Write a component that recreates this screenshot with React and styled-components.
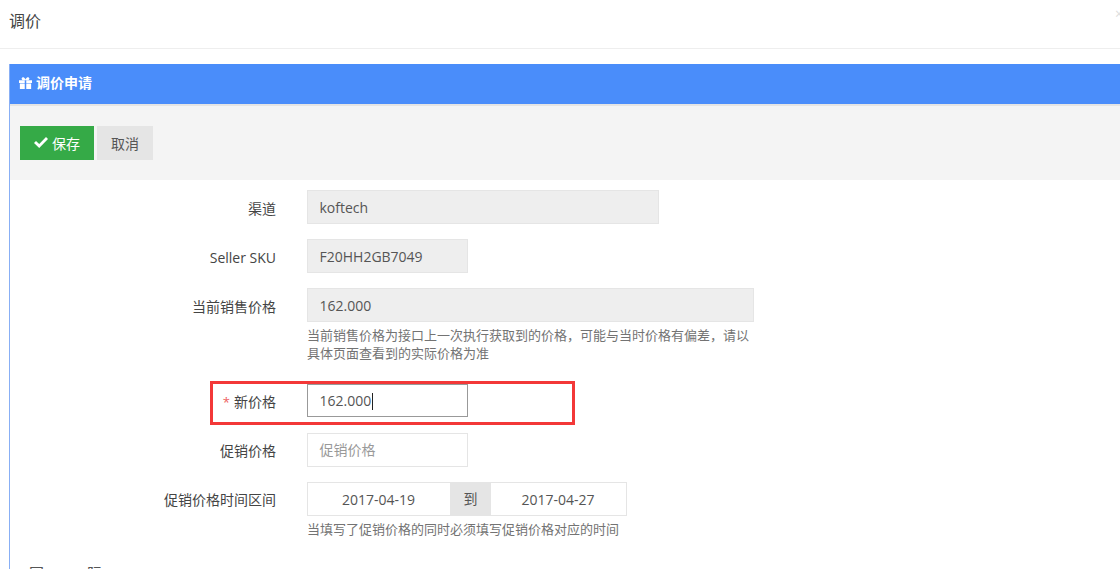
import React from "react";
import styled, { createGlobalStyle } from "styled-components";

const Global = createGlobalStyle`
  html, body { margin: 0; padding: 0; background: #fff; height: 569px; overflow: hidden; }
  * { box-sizing: border-box; }
  body { font-family: "Open Sans", "Noto Sans CJK SC", sans-serif; font-size: 14px; color: #555; }
`;
const Page = styled.div`width: 1120px; height: 569px; overflow: hidden; position: relative;`;
const ModalHeader = styled.header`
  height: 49px; border-bottom: 1px solid #eee; padding: 10px 9px 0;
  font-size: 16px; line-height: 22px; color: #444; position: relative;
`;
const CloseMark = styled.span`
  position: absolute; right: 0; top: 7px; font-size: 14px; color: #ddd; line-height: 14px; width: 5px; overflow: hidden;
`;
const Portlet = styled.section`
  margin: 15px 0 0 9px; border-left: 1px solid #88aff5; height: 520px;
`;
const PortletTitle = styled.div`
  height: 40px; background: #4a8dfa; color: #fff; display: flex; align-items: center;
  padding: 0 0 2px 9px; gap: 4px; font-size: 14px; font-weight: 700; line-height: 20px;
`;
const Actions = styled.div`
  border-top: 2px solid #e4e4e4; height: 76px; background: #f4f4f4;
  display: flex; align-items: flex-start; gap: 3px; padding: 20px 0 0 10px;
`;
const Btn = styled.button`
  height: 34px; border: 0; padding: 0 0 1px; font: inherit; font-size: 14px;
  display: flex; align-items: center; justify-content: center; gap: 4px;
  width: ${p => p.$w}px; background: ${p => p.$primary ? "#35aa47" : "#e5e5e5"};
  color: ${p => p.$primary ? "#fff" : "#555"};
`;
const Form = styled.div`padding-top: 10px; display: flex; flex-direction: column;`;
const Row = styled.div`
  display: flex; align-items: flex-start; margin-bottom: ${p => p.$mb ?? 15}px;
`;
const Label = styled.label`
  width: 266px; height: 34px; margin-right: 31px; text-align: right; font-size: 14px;
  line-height: ${p => p.$low ? 38 : 36}px; color: #444; flex: none; white-space: nowrap;
`;
const Star = styled.span`color: #ee5f5f; font-size: 13px; margin-right: 4px;`;
const Field = styled.div`display: flex; flex-direction: column;`;
const Input = styled.div`
  height: ${p => p.$h ?? 34}px; width: ${p => p.$w}px; padding-left: 11.5px; font-size: 14px;
  line-height: ${p => p.$focus ? 32 : p.$ph ? 32 : 33}px;
  border: 1px solid ${p => p.$focus ? "#999" : "#e5e5e5"};
  background: ${p => p.$disabled ? "#eee" : "#fff"};
  color: ${p => p.$ph ? "#999" : "#555"};
  white-space: nowrap;
`;
const Caret = styled.span`
  display: inline-block; width: 1px; height: 17px; background: #222; vertical-align: -4px; margin-left: 1px;
`;
const Help = styled.div`
  width: 447px; margin-top: 4px; font-size: 13px; line-height: 18px; color: #737373;
`;
const DateGroup = styled.div`display: flex; height: 34px; width: 320px;`;
const DateInput = styled.div`
  border: 1px solid #e5e5e5; width: ${p => p.$w}px; text-align: center; line-height: 33px;
  font-size: 14px; color: #555; ${p => p.$left ? "border-right: 0; padding-right: 1px;" : "border-left: 0; padding-right: 1px;"}
`;
const Addon = styled.div`
  width: 41px; background: #e5e5e5; text-align: center; line-height: 33px; font-size: 14px; color: #555;
`;
const Highlight = styled.div`
  position: absolute; left: 210px; top: 381px; width: 365px; height: 44px;
  border: 3px solid #f33838; pointer-events: none;
`;
const CutLabel = styled.div`
  position: absolute; left: 29px; top: 563px; font-size: 15px; color: #555; letter-spacing: 43px; line-height: 20px;
`;

const Gift = () => (
  <svg width="13" height="12" viewBox="0 0 12 11" fill="#fff">
    <path d="M0 3h5.3v2.4H0zM6.7 3H12v2.4H6.7zM.8 6h4.5v5H.8zM6.7 6h4.5v5H6.7z" />
    <path d="M6 3C4.6 3 2.6 3 2.4 1.7 2.3.5 3.6-.2 4.6.4 5.3.8 5.8 1.7 6 2.4 6.2 1.7 6.7.8 7.4.4 8.4-.2 9.7.5 9.6 1.7 9.4 3 7.4 3 6 3z" />
  </svg>
);
const Check = () => (
  <svg width="14" height="11" viewBox="0 0 14 11" fill="#fff">
    <path d="M0 5.9 2 3.9 5.2 7 12 0l2 2-8.8 9z" />
  </svg>
);

export default function App() {
  return (
    <Page>
      <Global />
      <ModalHeader>调价<CloseMark>×</CloseMark></ModalHeader>
      <Portlet>
        <PortletTitle><Gift />调价申请</PortletTitle>
        <Actions>
          <Btn $primary $w={74}><Check />保存</Btn>
          <Btn $w={56}>取消</Btn>
        </Actions>
        <Form>
          <Row><Label $low>渠道</Label><Input $disabled $w={352}>koftech</Input></Row>
          <Row><Label $low>Seller SKU</Label><Input $disabled $w={161}>F20HH2GB7049</Input></Row>
          <Row $mb={22}>
            <Label $low>当前销售价格</Label>
            <Field>
              <Input $disabled $w={447}>162.000</Input>
              <Help>当前销售价格为接口上一次执行获取到的价格，可能与当时价格有偏差，请以具体页面查看到的实际价格为准</Help>
            </Field>
          </Row>
          <Row $mb={15}>
            <Label><Star>*</Star>新价格</Label>
            <Input $focus $h={33} $w={161}>162.000<Caret /></Input>
          </Row>
          <Row><Label>促销价格</Label><Input $ph $w={161}>促销价格</Input></Row>
          <Row>
            <Label>促销价格时间区间</Label>
            <Field>
              <DateGroup>
                <DateInput $left $w={143}>2017-04-19</DateInput>
                <Addon>到</Addon>
                <DateInput $w={136}>2017-04-27</DateInput>
              </DateGroup>
              <Help>当填写了促销价格的同时必须填写促销价格对应的时间</Help>
            </Field>
          </Row>
        </Form>
      </Portlet>
      <CutLabel>国际</CutLabel>
      <Highlight />
    </Page>
  );
}
